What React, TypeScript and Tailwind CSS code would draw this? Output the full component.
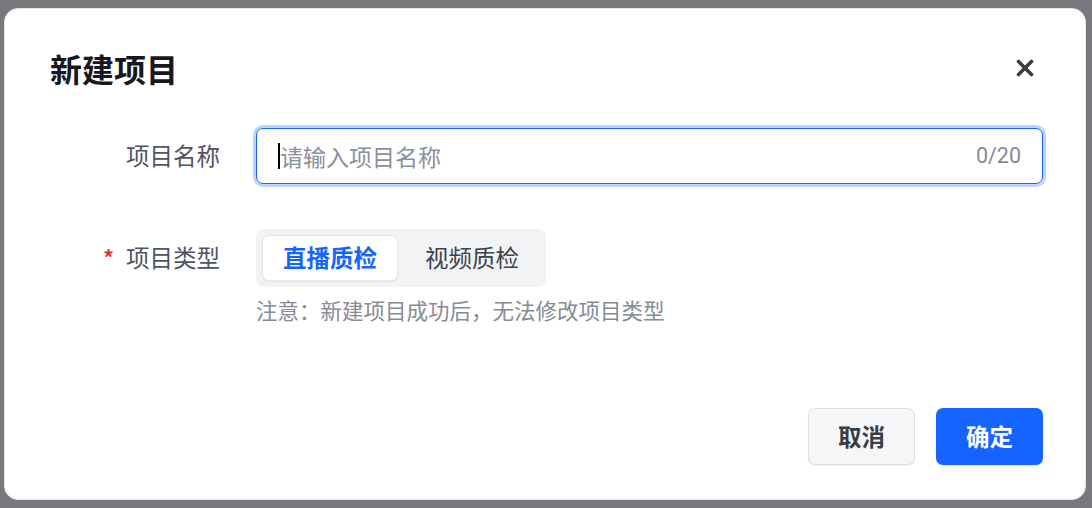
import React from "react";

export default function App() {
  const font = { fontFamily: '"Noto Sans CJK SC", "Noto Sans", Roboto, sans-serif' } as const;
  return (
    <div className="w-[1092px] h-[508px] bg-[#76787c] pt-2 pl-1 overflow-hidden" style={font}>
      <div className="w-[1082px] h-[492px] bg-white rounded-[14px] border border-[#e4e6ea] flex flex-col">
        {/* header */}
        <div className="flex items-center justify-between pl-[45px] pr-[51px] pt-[26px] h-[92px] shrink-0">
          <h1 className="text-[32px] font-bold text-[#16181d] leading-none">新建项目</h1>
          <svg width="18" height="18" viewBox="0 0 18 18" className="text-[#3a3d45]">
            <path d="M2.5 2.5 L15.5 15.5 M15.5 2.5 L2.5 15.5" stroke="currentColor" strokeWidth="3.6" strokeLinecap="round" />
          </svg>
        </div>

        {/* body */}
        <div className="flex flex-col pr-[42px] mt-[27px]">
          <div className="flex items-center">
            <div className="w-[251px] pr-[36px] text-right text-[23.5px] text-[#4e5461] shrink-0">项目名称</div>
            <div className="flex-1 h-[56px] rounded-[7px] border border-[#1664ff] ring-[3px] ring-[#bfd3ff] flex items-center pl-[21px] pr-[21px]">
              <div className="w-[2px] h-[26px] bg-black" />
              <span className="flex-1 text-[23px] text-[#8a909c]">请输入项目名称</span>
              <span className="text-[21.5px] text-[#868b95]" style={{ fontFamily: 'Roboto, "Noto Sans", sans-serif' }}>0/20</span>
            </div>
          </div>

          <div className="flex items-start mt-[45px]">
            <div className="w-[251px] pr-[36px] h-[58px] flex items-center justify-end text-[23.5px] text-[#4e5461] shrink-0">
              <span className="text-[#e0342c] mr-[12px] text-[21px] font-bold">*</span>
              项目类型
            </div>
            <div className="flex flex-col items-start">
              <div className="flex bg-[#f2f3f5] rounded-[8px] py-[6px] pl-[6px] h-[58px] items-stretch w-[290px]">
                <div className="w-[136px] bg-white rounded-[7px] border border-[#e3e5e9] shadow-[0_1px_2px_rgba(0,0,0,0.06)] flex items-center justify-center text-[23.5px] font-bold text-[#1664ff]">
                  直播质检
                </div>
                <div className="w-[148px] flex items-center justify-center text-[23.5px] text-[#3d424c]">视频质检</div>
              </div>
              <div className="mt-[9px] text-[21.5px] text-[#868b95] leading-[28px] whitespace-nowrap">注意：新建项目成功后，无法修改项目类型</div>
            </div>
          </div>
        </div>

        <div className="mt-auto mb-[34px] pr-[42px] flex justify-end gap-[21px]">
          <button className="w-[107px] h-[57px] rounded-[7px] bg-[#f5f6f8] border border-[#dcdfe4] shadow-[0_1px_2px_rgba(0,0,0,0.06)] text-[23.5px] font-bold text-[#3a3d45]">
            取消
          </button>
          <button className="w-[107px] h-[57px] rounded-[7px] bg-[#1664ff] text-[23.5px] font-bold text-white shadow-[0_1px_2px_rgba(0,0,0,0.1)]">
            确定
          </button>
        </div>
      </div>
    </div>
  );
}
